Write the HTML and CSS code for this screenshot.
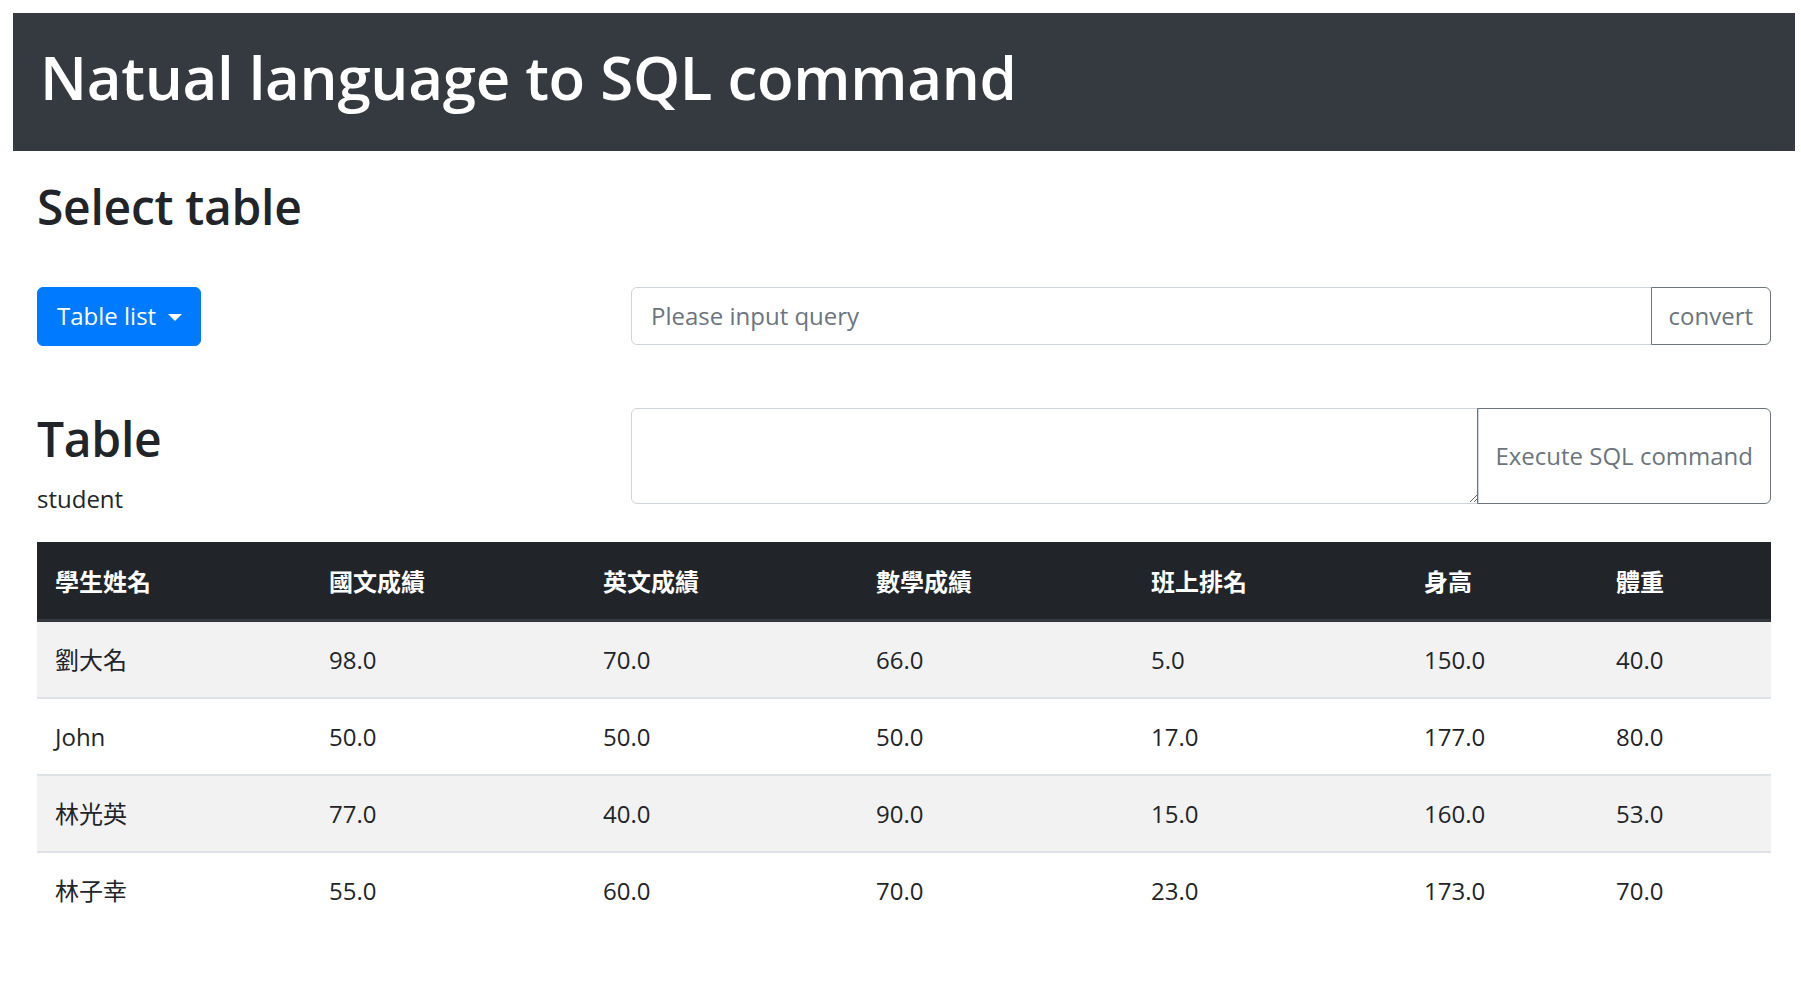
FILE: index.html
```html
<!DOCTYPE html>
<html lang="zh-Hant">
<head>
<meta charset="utf-8">
<title>Natual language to SQL command</title>
<link rel="stylesheet" href="styles.css">
</head>
<body>
<header class="topbar">
  <h1 class="title">Natual language to SQL command</h1>
</header>
<main class="main">
  <h2 class="heading select-heading">Select table</h2>
  <div class="row row-controls">
    <div class="col-left">
      <button class="btn btn-primary" type="button">Table list<span class="caret"></span></button>
    </div>
    <div class="col-right">
      <div class="input-group">
        <input class="form-control" type="text" placeholder="Please input query">
        <button class="btn btn-outline" type="button">convert</button>
      </div>
    </div>
  </div>
  <div class="row row-sql">
    <div class="col-left table-info">
      <h2 class="heading">Table</h2>
      <p class="table-name">student</p>
    </div>
    <div class="col-right">
      <div class="input-group sql-group">
        <textarea class="form-control sql-area"></textarea>
        <button class="btn btn-outline" type="button">Execute SQL command</button>
      </div>
    </div>
  </div>
  <table class="data-table">
    <colgroup>
      <col class="c1"><col class="c2"><col class="c3"><col class="c4"><col class="c5"><col class="c6"><col class="c7">
    </colgroup>
    <thead>
      <tr><th>學生姓名</th><th>國文成績</th><th>英文成績</th><th>數學成績</th><th>班上排名</th><th>身高</th><th>體重</th></tr>
    </thead>
    <tbody>
      <tr><td>劉大名</td><td>98.0</td><td>70.0</td><td>66.0</td><td>5.0</td><td>150.0</td><td>40.0</td></tr>
      <tr><td>John</td><td>50.0</td><td>50.0</td><td>50.0</td><td>17.0</td><td>177.0</td><td>80.0</td></tr>
      <tr><td>林光英</td><td>77.0</td><td>40.0</td><td>90.0</td><td>15.0</td><td>160.0</td><td>53.0</td></tr>
      <tr><td>林子幸</td><td>55.0</td><td>60.0</td><td>70.0</td><td>23.0</td><td>173.0</td><td>70.0</td></tr>
    </tbody>
  </table>
</main>
</body>
</html>
```

FILE: styles.css
```css
* { box-sizing: border-box; }

html, body {
  margin: 0;
  padding: 0;
  background: #fff;
}

body {
  font-family: "Open Sans", "Noto Sans CJK TC", sans-serif;
  font-size: 24px;
  line-height: 36px;
  color: #212529;
}

.topbar {
  margin: 13px 6px 0 13px;
  height: 138px;
  background: #343a40;
  padding: 28px 0 0 27px;
}

.title {
  margin: 0;
  font-size: 60px;
  line-height: 72px;
  font-weight: 600;
  letter-spacing: -0.3px;
  color: #fff;
}

.main {
  padding: 0 30px 0 37px;
}

.heading {
  margin: 0;
  font-size: 48px;
  line-height: 57.6px;
  font-weight: 600;
  letter-spacing: -0.3px;
}

.select-heading {
  margin-top: 27px;
}

.row {
  display: grid;
  grid-template-columns: 548px 1fr;
  column-gap: 46px;
  align-items: start;
}

.row-controls {
  margin-top: 51px;
}

.row-sql {
  margin-top: 62px;
}

.btn {
  font-family: inherit;
  font-size: 24px;
  line-height: 36px;
  border-radius: 6px;
  padding: 10px 18px;
  cursor: pointer;
  white-space: nowrap;
}

.btn-primary {
  background: #007bff;
  border: 1.5px solid #007bff;
  color: #fff;
  height: 59px;
  display: inline-flex;
  align-items: center;
  padding: 0 18px 0 19px;
}

.caret {
  display: inline-block;
  margin-left: 12px;
  margin-top: 2px;
  width: 0;
  height: 0;
  border-top: 7.5px solid #fff;
  border-left: 7px solid transparent;
  border-right: 7px solid transparent;
}

.input-group {
  display: flex;
  height: 58px;
}

.form-control {
  flex: 1;
  min-width: 0;
  font-family: inherit;
  font-size: 24px;
  line-height: 36px;
  color: #495057;
  background: #fff;
  border: 1.5px solid #ced4da;
  border-radius: 6px 0 0 6px;
  padding: 9px 19px;
  outline: none;
}

.form-control::placeholder {
  color: #6c757d;
  opacity: 1;
}

.btn-outline {
  background: transparent;
  border: 1.5px solid #6c757d;
  color: #6c757d;
  border-radius: 0 6px 6px 0;
  margin-left: -1.5px;
  padding: 0 17px;
}

.sql-group {
  height: 96px;
}

.sql-area {
  resize: vertical;
  height: 96px;
}

.table-info {
  padding-top: 2px;
}

.table-name {
  margin: 14px 0 0;
}

.data-table {
  margin-top: 25px;
  width: 1734px;
  table-layout: fixed;
  border-collapse: separate;
  border-spacing: 0;
}

.c1 { width: 274px; }
.c2 { width: 274px; }
.c3 { width: 273px; }
.c4 { width: 275px; }
.c5 { width: 273px; }
.c6 { width: 192px; }
.c7 { width: 173px; }

.data-table th,
.data-table td {
  text-align: left;
  padding: 0 18px;
  vertical-align: middle;
  font-size: 24px;
  line-height: 36px;
}

.data-table th {
  background: #212529;
  color: #fff;
  font-weight: 700;
  height: 80px;
  border-bottom: 3px solid #32383e;
  padding-top: 2px;
}

.data-table td {
  height: 75px;
  font-weight: 400;
}

.data-table tbody tr:nth-child(odd) td {
  background: #f2f2f2;
}

.data-table tbody tr + tr td {
  border-top: 2px solid #dee2e6;
  height: 77px;
}
```
